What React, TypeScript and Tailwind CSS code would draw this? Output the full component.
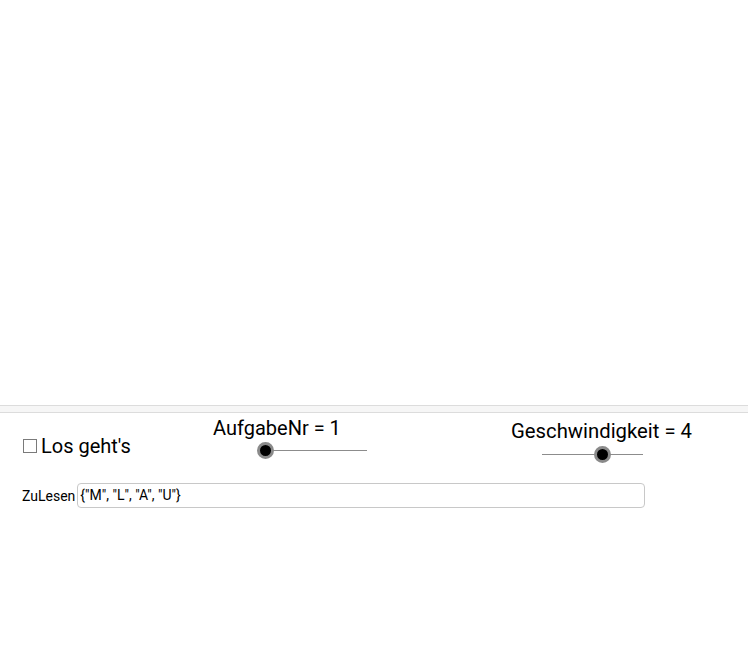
import React from 'react';

const font = { fontFamily: 'Roboto, "Liberation Sans", sans-serif' };

// GeoGebra slider: thin track with a round knob, placed on the canvas
function Slider({ left, top, width, value }: { left: number; top: number; width: number; value: number }) {
  return (
    <div className="absolute h-[18px]" style={{ left, top, width }}>
      <div className="absolute left-0 right-0 top-[8px] h-px bg-[#8c8c8c]" />
      <div
        className="absolute top-0 h-[17px] w-[17px] rounded-full border-[3px] border-[#8a8a8a] bg-black"
        style={{ left: value - 8.5 }}
      />
    </div>
  );
}

export default function App() {
  return (
    <div className="flex h-[650px] w-[750px] flex-col overflow-hidden bg-white text-black" style={font}>
      {/* empty graphics view */}
      <div className="h-[405px] shrink-0" />
      {/* separator band */}
      <div className="h-[8px] w-[748px] shrink-0 border-y border-[#dcdcdc] bg-[#f6f6f6]" />

      {/* second graphics view with objects */}
      <div className="relative flex-1">
        <label className="absolute left-[23px] top-[23px] flex items-center gap-[4px] text-[20px] leading-none">
          <span className="inline-block h-[14px] w-[14px] border border-[#7a7a7a] bg-white" />
          <span>Los geht's</span>
        </label>

        <div className="absolute left-[213px] top-[3px] text-[20px] leading-[24px]">AufgabeNr = 1</div>
        <Slider left={265} top={29} width={102} value={0} />

        <div className="absolute left-[511px] top-[6px] text-[20.3px] leading-[24px]">Geschwindigkeit = 4</div>
        <Slider left={542} top={33} width={101} value={60} />

        <div className="absolute left-[22px] top-[70px] flex items-center gap-[2px]">
          <span className="text-[14px] leading-none">ZuLesen</span>
          <div className="flex h-[25px] w-[568px] items-center rounded-[4px] border border-[#c8c8c8] px-[2px] text-[14px]">
            {'{"M", "L", "A", "U"}'}
          </div>
        </div>
      </div>
    </div>
  );
}
